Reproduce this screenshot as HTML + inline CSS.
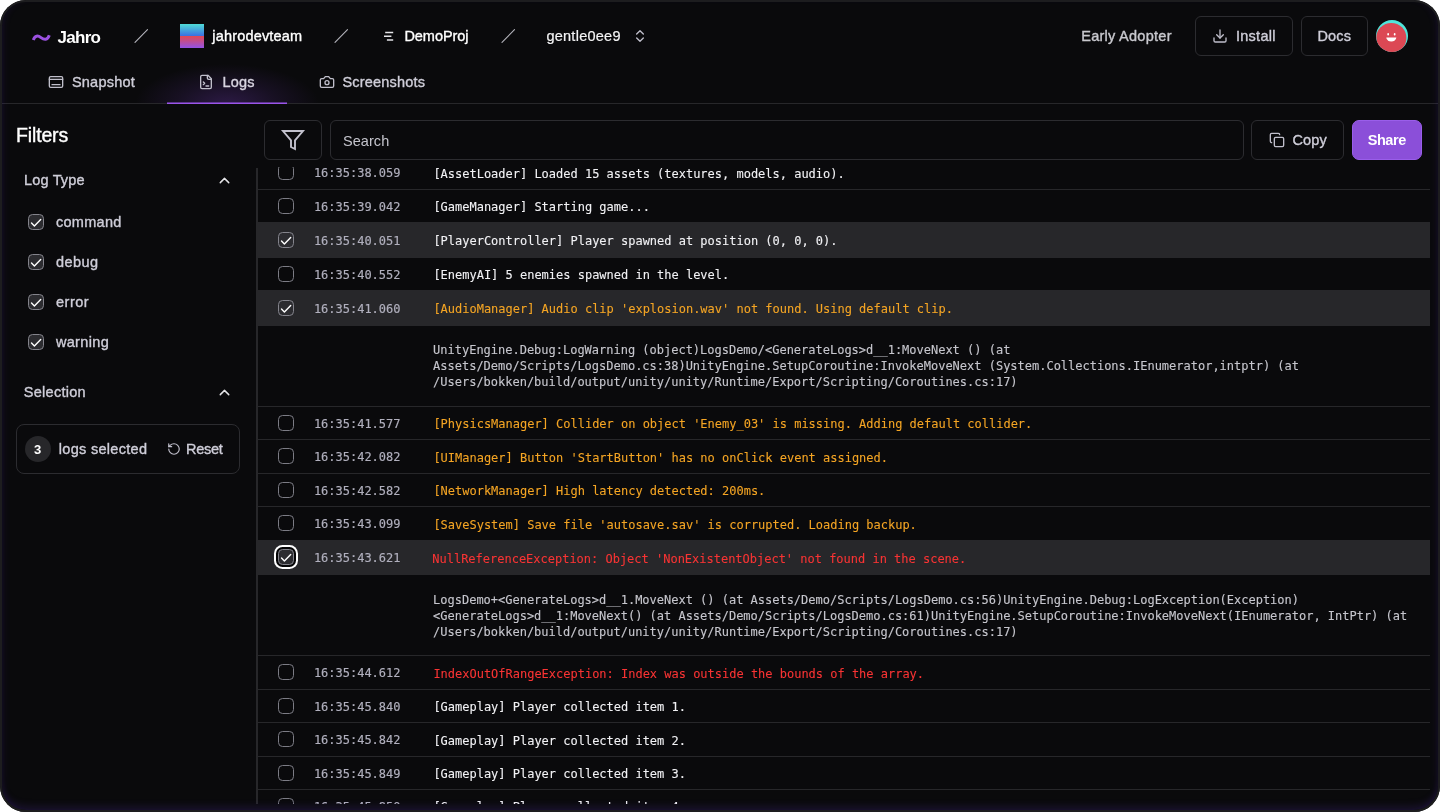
<!DOCTYPE html>
<html lang="en"><head><meta charset="utf-8"><title>Jahro - Logs</title>
<style>
html,body{margin:0;padding:0;background:#fff;}
body{width:1440px;height:812px;overflow:hidden;font-family:"Liberation Sans",Arial,sans-serif;}
#win{will-change:transform;position:absolute;left:0;top:0;width:1440px;height:812px;border-radius:26px;background:#0a0a0c;overflow:hidden;}
#frame{position:absolute;left:0;top:0;width:1440px;height:812px;box-sizing:border-box;border:2px solid #1d1d1f;border-radius:26px;
 box-shadow:inset 0 -7px 9px -4px rgba(100,55,200,.2), inset 6px 0 7px -4px rgba(105,60,225,.09), inset -6px 0 7px -4px rgba(105,60,225,.09);pointer-events:none;z-index:50;}
.t{position:absolute;white-space:nowrap;line-height:20px;height:20px;}
.i{position:absolute;display:block;overflow:visible;}
.btn{position:absolute;box-sizing:border-box;border:1px solid #2c2c30;border-radius:6px;}
.m{-webkit-text-stroke:.16px;font-family:"DejaVu Sans Mono","Liberation Mono",monospace;font-size:12px;line-height:16px;white-space:pre;position:absolute;letter-spacing:-0.009px;}
.cb{position:absolute;box-sizing:border-box;width:16px;height:16px;border:1px solid #7c7c85;border-radius:4.5px;}
.cb.on{background:#2c2c30;border-color:#84848c;}
.cb svg{position:absolute;left:-1px;top:-1px;}
.hl{position:absolute;left:0;width:1172px;background:#27272a;}
.ln{position:absolute;left:0;width:1172px;height:1px;background:#27272a;}
</style></head><body>
<div id="win">

<svg class="i" style="left:30px;top:29px" width="24" height="16" viewBox="0 0 24 16" fill="none" stroke="#9b51e0" stroke-width="3" stroke-linecap="butt"><path d="M3.3 10.9 C4.9 6.3 8.0 6.3 11.0 8.6 C14.2 11.0 17.4 11.4 19.3 6.2"/></svg>
<span class="t" style="left:57.60px;top:27.60px;font-size:17px;font-weight:700;color:#ffffff;letter-spacing:-0.723px;">Jahro</span>
<svg class="i" style="left:134px;top:28px" width="16" height="16" viewBox="0 0 16 16" fill="none" stroke="#b4b4bc" stroke-width="1.1" stroke-linecap="round"><path d="M1.0 14.3 L13.5 1.7"/></svg>
<svg class="i" style="left:334px;top:28px" width="16" height="16" viewBox="0 0 16 16" fill="none" stroke="#b4b4bc" stroke-width="1.1" stroke-linecap="round"><path d="M1.0 14.3 L13.5 1.7"/></svg>
<svg class="i" style="left:500.5px;top:28px" width="16" height="16" viewBox="0 0 16 16" fill="none" stroke="#b4b4bc" stroke-width="1.1" stroke-linecap="round"><path d="M1.0 14.3 L13.5 1.7"/></svg>
<div style="position:absolute;left:180px;top:24px;width:24px;height:24px;background:linear-gradient(180deg,#4fdcd6 0%,#3c6fe2 50%,#e24a52 50%,#9452e6 100%);"></div>
<span class="t" style="left:212.30px;top:26.00px;font-size:14.5px;font-weight:400;color:#ffffff;letter-spacing:0.177px;-webkit-text-stroke:.36px;">jahrodevteam</span>
<svg class="i" style="left:382px;top:28px" width="14" height="16" viewBox="0 0 14 16" fill="none" stroke="#e4e4e7" stroke-width="1.5" stroke-linecap="butt"><path d="M3.2 4.4 H11.2 M2 8.2 H9.4 M4.9 12 H11.2"/></svg>
<span class="t" style="left:404.40px;top:25.50px;font-size:14.5px;font-weight:400;color:#ffffff;letter-spacing:-0.038px;-webkit-text-stroke:.36px;">DemoProj</span>
<span class="t" style="left:546.40px;top:25.50px;font-size:14.5px;font-weight:400;color:#f4f4f5;letter-spacing:0.260px;-webkit-text-stroke:.2px;">gentle0ee9</span>
<svg class="i" style="left:632.2px;top:28px;" width="16" height="16" viewBox="0 0 24 24" fill="none" stroke="#c0bfcb" stroke-width="2" stroke-linecap="round" stroke-linejoin="round"><path d="m7 15 5 5 5-5"/><path d="m7 9 5-5 5 5"/></svg>
<span class="t" style="left:1081.20px;top:25.50px;font-size:14.5px;font-weight:400;color:#c9c9cf;letter-spacing:0.271px;-webkit-text-stroke:.36px;">Early Adopter</span>
<div class="btn" style="left:1195px;top:16px;width:97.5px;height:40px"></div>
<svg class="i" style="left:1212px;top:28px;" width="16" height="16" viewBox="0 0 24 24" fill="none" stroke="#c0bfcb" stroke-width="2" stroke-linecap="round" stroke-linejoin="round"><path d="M21 15v4a2 2 0 0 1-2 2H5a2 2 0 0 1-2-2v-4"/><polyline points="7 10 12 15 17 10"/><line x1="12" x2="12" y1="15" y2="3"/></svg>
<span class="t" style="left:1235.90px;top:25.50px;font-size:14.5px;font-weight:400;color:#cfced9;letter-spacing:0.287px;-webkit-text-stroke:.36px;">Install</span>
<div class="btn" style="left:1300.5px;top:16px;width:67.5px;height:40px"></div>
<span class="t" style="left:1317.40px;top:25.50px;font-size:14.5px;font-weight:400;color:#cfced9;letter-spacing:0.221px;-webkit-text-stroke:.36px;">Docs</span>
<svg class="i" style="left:1376px;top:20px" width="32" height="32" viewBox="0 0 32 32"><defs><clipPath id="uc"><circle cx="16" cy="16" r="16"/></clipPath></defs><g clip-path="url(#uc)"><rect width="32" height="32" fill="#4fe6dc"/><circle cx="15.3" cy="18" r="15.1" fill="#dc4854"/><rect x="11.3" y="13.1" width="1.7" height="2.4" rx=".8" fill="#fff"/><rect x="17.8" y="13.1" width="1.7" height="2.4" rx=".8" fill="#fff"/><path d="M10.3 17.5 H20.3 A5 4 0 0 1 10.3 17.5 Z" fill="#fff"/></g></svg>
<div style="position:absolute;left:107px;top:60px;width:240px;height:44px;background:radial-gradient(ellipse 92px 40px at 50% 100%,rgba(140,70,230,.26),rgba(140,70,230,.10) 55%,rgba(140,70,230,0) 100%);"></div>
<div style="position:absolute;left:0;top:103px;width:1440px;height:1px;background:#27272a"></div>
<div style="position:absolute;left:167px;top:102px;width:120px;height:1px;background:#9550e4;opacity:.55"></div>
<div style="position:absolute;left:167px;top:103px;width:120px;height:1px;background:#9a55ea"></div>
<svg class="i" style="left:48px;top:74px;" width="16" height="16" viewBox="0 0 24 24" fill="none" stroke="#c0bfcb" stroke-width="2" stroke-linecap="round" stroke-linejoin="round"><path d="M2 8h20"/><rect width="20" height="16" x="2" y="4" rx="2"/><path d="M6 16h12"/></svg>
<span class="t" style="left:71.90px;top:71.50px;font-size:14.5px;font-weight:400;color:#cfced9;letter-spacing:0.247px;-webkit-text-stroke:.36px;">Snapshot</span>
<svg class="i" style="left:198.3px;top:74px;" width="16" height="16" viewBox="0 0 24 24" fill="none" stroke="#c0bfcb" stroke-width="2" stroke-linecap="round" stroke-linejoin="round"><path d="M15 2H6a2 2 0 0 0-2 2v16a2 2 0 0 0 2 2h12a2 2 0 0 0 2-2V7Z"/><path d="M14 2v4a2 2 0 0 0 2 2h4"/><path d="m8 16 2-2-2-2"/><path d="M12 18h4"/></svg>
<span class="t" style="left:222.40px;top:71.50px;font-size:14.5px;font-weight:400;color:#d8d4e0;letter-spacing:0.219px;-webkit-text-stroke:.36px;">Logs</span>
<svg class="i" style="left:318.5px;top:74px;" width="16" height="16" viewBox="0 0 24 24" fill="none" stroke="#c0bfcb" stroke-width="2" stroke-linecap="round" stroke-linejoin="round"><path d="M14.5 4h-5L7 7H4a2 2 0 0 0-2 2v9a2 2 0 0 0 2 2h16a2 2 0 0 0 2-2V9a2 2 0 0 0-2-2h-3l-2.5-3z"/><circle cx="12" cy="13" r="3"/></svg>
<span class="t" style="left:342.40px;top:71.50px;font-size:14.5px;font-weight:400;color:#cfced9;letter-spacing:0.210px;-webkit-text-stroke:.36px;">Screenshots</span>
<span class="t" style="left:16.10px;top:124.50px;font-size:19.5px;font-weight:400;color:#ffffff;letter-spacing:-0.164px;line-height:24px;height:24px;margin-top:-2px;-webkit-text-stroke:.36px;">Filters</span>
<span class="t" style="left:24.10px;top:169.50px;font-size:14.5px;font-weight:400;color:#cfced9;letter-spacing:0.144px;-webkit-text-stroke:.36px;">Log Type</span>
<svg class="i" style="left:215.5px;top:171.5px;" width="17" height="17" viewBox="0 0 24 24" fill="none" stroke="#e4e4e7" stroke-width="2" stroke-linecap="round" stroke-linejoin="round"><path d="m18 15-6-6-6 6"/></svg>
<div class="cb on" style="left:28px;top:214px"><svg width="16" height="16" viewBox="0 0 16 16" fill="none" stroke="#fff" stroke-width="1.4" stroke-linecap="round" stroke-linejoin="round"><path d="M3.5 9.1 L6.4 12.0 L12.7 5.5"/></svg></div>
<span class="t" style="left:55.90px;top:211.50px;font-size:14.5px;font-weight:400;color:#cfced9;letter-spacing:0.306px;-webkit-text-stroke:.36px;">command</span>
<div class="cb on" style="left:28px;top:254px"><svg width="16" height="16" viewBox="0 0 16 16" fill="none" stroke="#fff" stroke-width="1.4" stroke-linecap="round" stroke-linejoin="round"><path d="M3.5 9.1 L6.4 12.0 L12.7 5.5"/></svg></div>
<span class="t" style="left:55.90px;top:251.50px;font-size:14.5px;font-weight:400;color:#cfced9;letter-spacing:0.445px;-webkit-text-stroke:.36px;">debug</span>
<div class="cb on" style="left:28px;top:294px"><svg width="16" height="16" viewBox="0 0 16 16" fill="none" stroke="#fff" stroke-width="1.4" stroke-linecap="round" stroke-linejoin="round"><path d="M3.5 9.1 L6.4 12.0 L12.7 5.5"/></svg></div>
<span class="t" style="left:55.90px;top:291.50px;font-size:14.5px;font-weight:400;color:#cfced9;letter-spacing:0.546px;-webkit-text-stroke:.36px;">error</span>
<div class="cb on" style="left:28px;top:334px"><svg width="16" height="16" viewBox="0 0 16 16" fill="none" stroke="#fff" stroke-width="1.4" stroke-linecap="round" stroke-linejoin="round"><path d="M3.5 9.1 L6.4 12.0 L12.7 5.5"/></svg></div>
<span class="t" style="left:55.90px;top:331.50px;font-size:14.5px;font-weight:400;color:#cfced9;letter-spacing:0.337px;-webkit-text-stroke:.36px;">warning</span>
<span class="t" style="left:23.70px;top:381.50px;font-size:14.5px;font-weight:400;color:#cfced9;letter-spacing:0.294px;-webkit-text-stroke:.36px;">Selection</span>
<svg class="i" style="left:215.5px;top:383.5px;" width="17" height="17" viewBox="0 0 24 24" fill="none" stroke="#e4e4e7" stroke-width="2" stroke-linecap="round" stroke-linejoin="round"><path d="m18 15-6-6-6 6"/></svg>
<div class="btn" style="left:16px;top:424px;width:224px;height:50px;border-radius:8px"></div>
<div style="position:absolute;left:25px;top:436px;width:26px;height:26px;border-radius:13px;background:#27272a"></div>
<span class="t" style="left:34.10px;top:439.50px;font-size:13px;font-weight:700;color:#ffffff;letter-spacing:0.000px;">3</span>
<span class="t" style="left:58.80px;top:438.50px;font-size:14.5px;font-weight:400;color:#cfced9;letter-spacing:0.297px;-webkit-text-stroke:.36px;">logs selected</span>
<svg class="i" style="left:167.3px;top:442px;" width="14" height="14" viewBox="0 0 24 24" fill="none" stroke="#c0bfcb" stroke-width="2" stroke-linecap="round" stroke-linejoin="round"><path d="M3 12a9 9 0 1 0 9-9 9.75 9.75 0 0 0-6.74 2.74L3 8"/><path d="M3 3v5h5"/></svg>
<span class="t" style="left:185.90px;top:438.50px;font-size:14.5px;font-weight:400;color:#cfced9;letter-spacing:-0.220px;-webkit-text-stroke:.36px;">Reset</span>
<div class="btn" style="left:264px;top:120px;width:58px;height:40px"></div>
<svg class="i" style="left:281px;top:128px;" width="24" height="24" viewBox="0 0 24 24" fill="none" stroke="#c2c1cd" stroke-width="1.9" stroke-linecap="round" stroke-linejoin="round"><polygon points="22 3 2 3 10 12.46 10 19 14 21 14 12.46 22 3" stroke-linejoin="miter"/></svg>
<div class="btn" style="left:330px;top:120px;width:913.5px;height:40px"></div>
<span class="t" style="left:343.00px;top:131.00px;font-size:14.5px;font-weight:400;color:#c4c4cc;letter-spacing:0.051px;">Search</span>
<div class="btn" style="left:1251px;top:120px;width:93px;height:40px"></div>
<svg class="i" style="left:1268.6px;top:132px;" width="16" height="16" viewBox="0 0 24 24" fill="none" stroke="#c0bfcb" stroke-width="2" stroke-linecap="round" stroke-linejoin="round"><rect width="14" height="14" x="8" y="8" rx="2" ry="2"/><path d="M4 16c-1.1 0-2-.9-2-2V4c0-1.1.9-2 2-2h10c1.1 0 2 .9 2 2"/></svg>
<span class="t" style="left:1292.40px;top:129.50px;font-size:14.5px;font-weight:400;color:#cfced9;letter-spacing:0.183px;-webkit-text-stroke:.36px;">Copy</span>
<div style="position:absolute;left:1352px;top:120px;width:70px;height:40px;box-sizing:border-box;border-radius:7px;background:#8b4fd9;border:1px solid #9a5eea"></div>
<span class="t" style="left:1367.70px;top:129.50px;font-size:14.5px;font-weight:700;color:#ffffff;letter-spacing:-0.425px;">Share</span>
<div style="position:absolute;left:256px;top:168px;width:2px;height:636px;background:#27272a"></div>
<div id="list" style="position:absolute;left:258px;top:167px;width:1172px;height:637px;overflow:hidden">
<div class="ln" style="top:22px"></div>
<div class="cb" style="left:20px;top:-3px;"></div>
<span class="m" style="left:55.9px;top:-2px;color:#b1b0be">16:35:38.059</span>
<span class="m" style="left:175.4px;top:-1px;-webkit-text-stroke:.1px;color:#f2f2f5">[AssetLoader] Loaded 15 assets (textures, models, audio).</span>
<div class="ln" style="top:55px"></div>
<div class="cb" style="left:20px;top:31px;"></div>
<span class="m" style="left:55.9px;top:32px;color:#b1b0be">16:35:39.042</span>
<span class="m" style="left:175.4px;top:32px;-webkit-text-stroke:.1px;color:#f2f2f5">[GameManager] Starting game...</span>
<div class="hl" style="top:55px;height:36px"></div>
<div class="ln" style="top:90px"></div>
<div class="cb on" style="left:20px;top:65px;"><svg width="16" height="16" viewBox="0 0 16 16" fill="none" stroke="#fff" stroke-width="1.4" stroke-linecap="round" stroke-linejoin="round"><path d="M3.5 9.1 L6.4 12.0 L12.7 5.5"/></svg></div>
<span class="m" style="left:55.9px;top:66px;color:#b1b0be">16:35:40.051</span>
<span class="m" style="left:175.4px;top:66px;-webkit-text-stroke:.1px;color:#f2f2f5">[PlayerController] Player spawned at position (0, 0, 0).</span>
<div class="ln" style="top:123px"></div>
<div class="cb" style="left:20px;top:99px;"></div>
<span class="m" style="left:55.9px;top:100px;color:#b1b0be">16:35:40.552</span>
<span class="m" style="left:175.4px;top:100px;-webkit-text-stroke:.1px;color:#f2f2f5">[EnemyAI] 5 enemies spawned in the level.</span>
<div class="hl" style="top:123px;height:36px"></div>
<div class="ln" style="top:158px"></div>
<div class="cb on" style="left:20px;top:133px;"><svg width="16" height="16" viewBox="0 0 16 16" fill="none" stroke="#fff" stroke-width="1.4" stroke-linecap="round" stroke-linejoin="round"><path d="M3.5 9.1 L6.4 12.0 L12.7 5.5"/></svg></div>
<span class="m" style="left:55.9px;top:134px;color:#b1b0be">16:35:41.060</span>
<span class="m" style="left:175.4px;top:134px;-webkit-text-stroke:.1px;color:#f5a524">[AudioManager] Audio clip &#x27;explosion.wav&#x27; not found. Using default clip.</span>
<div class="ln" style="top:239px"></div>
<span class="m" style="left:175.1px;top:175px;color:#c6c6cd;-webkit-text-stroke:.12px">UnityEngine.Debug:LogWarning (object)LogsDemo/&lt;GenerateLogs&gt;d__1:MoveNext () (at</span>
<span class="m" style="left:175.1px;top:191px;color:#c6c6cd;-webkit-text-stroke:.12px">Assets/Demo/Scripts/LogsDemo.cs:38)UnityEngine.SetupCoroutine:InvokeMoveNext (System.Collections.IEnumerator,intptr) (at</span>
<span class="m" style="left:175.1px;top:207px;color:#c6c6cd;-webkit-text-stroke:.12px">/Users/bokken/build/output/unity/unity/Runtime/Export/Scripting/Coroutines.cs:17)</span>
<div class="ln" style="top:272px"></div>
<div class="cb" style="left:20px;top:248px;"></div>
<span class="m" style="left:55.9px;top:249px;color:#b1b0be">16:35:41.577</span>
<span class="m" style="left:175.4px;top:249px;-webkit-text-stroke:.1px;color:#f5a524">[PhysicsManager] Collider on object &#x27;Enemy_03&#x27; is missing. Adding default collider.</span>
<div class="ln" style="top:306px"></div>
<div class="cb" style="left:20px;top:281px;"></div>
<span class="m" style="left:55.9px;top:282px;color:#b1b0be">16:35:42.082</span>
<span class="m" style="left:175.4px;top:283px;-webkit-text-stroke:.1px;color:#f5a524">[UIManager] Button &#x27;StartButton&#x27; has no onClick event assigned.</span>
<div class="ln" style="top:339px"></div>
<div class="cb" style="left:20px;top:315px;"></div>
<span class="m" style="left:55.9px;top:316px;color:#b1b0be">16:35:42.582</span>
<span class="m" style="left:175.4px;top:316px;-webkit-text-stroke:.1px;color:#f5a524">[NetworkManager] High latency detected: 200ms.</span>
<div class="ln" style="top:373px"></div>
<div class="cb" style="left:20px;top:348px;"></div>
<span class="m" style="left:55.9px;top:349px;color:#b1b0be">16:35:43.099</span>
<span class="m" style="left:175.4px;top:350px;-webkit-text-stroke:.1px;color:#f5a524">[SaveSystem] Save file &#x27;autosave.sav&#x27; is corrupted. Loading backup.</span>
<div class="hl" style="top:373px;height:35px"></div>
<div class="ln" style="top:407px"></div>
<div class="cb on" style="left:20px;top:382px;box-shadow:0 0 0 2px #050506,0 0 0 4px #fff;"><svg width="16" height="16" viewBox="0 0 16 16" fill="none" stroke="#fff" stroke-width="1.4" stroke-linecap="round" stroke-linejoin="round"><path d="M3.5 9.1 L6.4 12.0 L12.7 5.5"/></svg></div>
<span class="m" style="left:55.9px;top:383px;color:#b1b0be">16:35:43.621</span>
<span class="m" style="left:174.3px;top:384px;-webkit-text-stroke:.1px;color:#f93434">NullReferenceException: Object &#x27;NonExistentObject&#x27; not found in the scene.</span>
<div class="ln" style="top:488px"></div>
<span class="m" style="left:175.1px;top:425px;color:#c6c6cd;-webkit-text-stroke:.12px">LogsDemo+&lt;GenerateLogs&gt;d__1.MoveNext () (at Assets/Demo/Scripts/LogsDemo.cs:56)UnityEngine.Debug:LogException(Exception)</span>
<span class="m" style="left:175.1px;top:441px;color:#c6c6cd;-webkit-text-stroke:.12px">&lt;GenerateLogs&gt;d__1:MoveNext() (at Assets/Demo/Scripts/LogsDemo.cs:61)UnityEngine.SetupCoroutine:InvokeMoveNext(IEnumerator, IntPtr) (at</span>
<span class="m" style="left:175.1px;top:457px;color:#c6c6cd;-webkit-text-stroke:.12px">/Users/bokken/build/output/unity/unity/Runtime/Export/Scripting/Coroutines.cs:17)</span>
<div class="ln" style="top:522px"></div>
<div class="cb" style="left:20px;top:497px;"></div>
<span class="m" style="left:55.9px;top:498px;color:#b1b0be">16:35:44.612</span>
<span class="m" style="left:175.4px;top:499px;-webkit-text-stroke:.1px;color:#f93434">IndexOutOfRangeException: Index was outside the bounds of the array.</span>
<div class="ln" style="top:555px"></div>
<div class="cb" style="left:20px;top:531px;"></div>
<span class="m" style="left:55.9px;top:532px;color:#b1b0be">16:35:45.840</span>
<span class="m" style="left:175.4px;top:532px;-webkit-text-stroke:.1px;color:#f2f2f5">[Gameplay] Player collected item 1.</span>
<div class="ln" style="top:589px"></div>
<div class="cb" style="left:20px;top:564px;"></div>
<span class="m" style="left:55.9px;top:565px;color:#b1b0be">16:35:45.842</span>
<span class="m" style="left:175.4px;top:566px;-webkit-text-stroke:.1px;color:#f2f2f5">[Gameplay] Player collected item 2.</span>
<div class="ln" style="top:622px"></div>
<div class="cb" style="left:20px;top:598px;"></div>
<span class="m" style="left:55.9px;top:599px;color:#b1b0be">16:35:45.849</span>
<span class="m" style="left:175.4px;top:599px;-webkit-text-stroke:.1px;color:#f2f2f5">[Gameplay] Player collected item 3.</span>
<div class="ln" style="top:656px"></div>
<div class="cb" style="left:20px;top:631px;"></div>
<span class="m" style="left:55.9px;top:632px;color:#b1b0be">16:35:45.850</span>
<span class="m" style="left:175.4px;top:632px;-webkit-text-stroke:.1px;color:#f2f2f5">[Gameplay] Player collected item 4.</span>
</div>
</div><div id="frame"></div></body></html>
